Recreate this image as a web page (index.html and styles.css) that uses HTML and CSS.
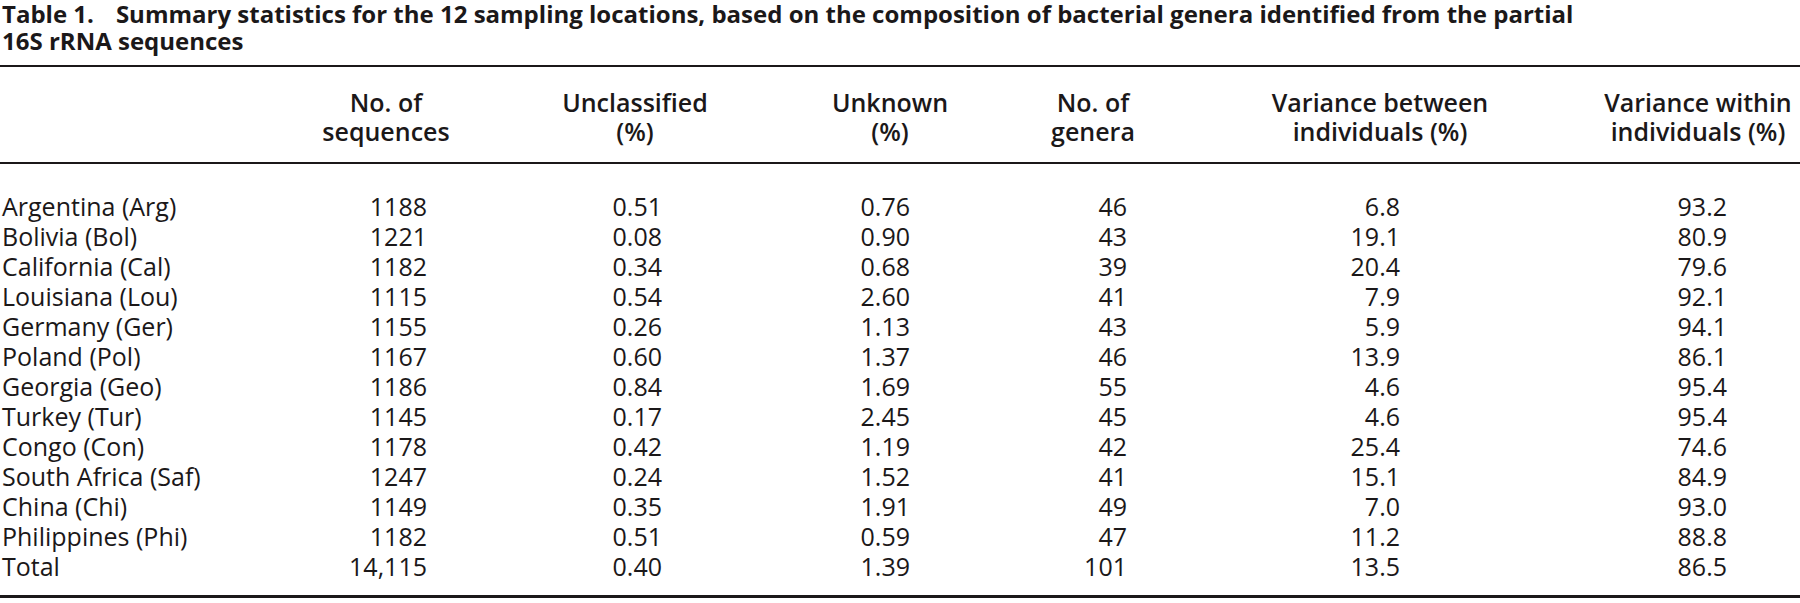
FILE: index.html
```html
<!DOCTYPE html>
<html lang="en">
<head>
<meta charset="utf-8">
<title>Table 1</title>
<link rel="stylesheet" href="styles.css">
</head>
<body>
<div class="page">
  <p class="caption"><span class="label">Table 1.</span><span class="caption-text">Summary statistics for the 12 sampling locations, based on the composition of bacterial genera identified from the partial<br>16S rRNA sequences</span></p>
  <table class="stats">
    <colgroup>
      <col class="c-loc">
      <col class="c-seq">
      <col class="c-uncl">
      <col class="c-unk">
      <col class="c-gen">
      <col class="c-vb">
      <col class="c-vw">
    </colgroup>
    <thead>
      <tr>
        <th class="h-loc"></th>
        <th>No. of<br>sequences</th>
        <th>Unclassified<br>(%)</th>
        <th>Unknown<br>(%)</th>
        <th>No. of<br>genera</th>
        <th>Variance between<br>individuals (%)</th>
        <th>Variance within<br>individuals (%)</th>
      </tr>
    </thead>
    <tbody>
      <tr><td class="loc">Argentina (Arg)</td><td class="seq">1188</td><td class="uncl">0.51</td><td class="unk">0.76</td><td class="gen">46</td><td class="vb">6.8</td><td class="vw">93.2</td></tr>
      <tr><td class="loc">Bolivia (Bol)</td><td class="seq">1221</td><td class="uncl">0.08</td><td class="unk">0.90</td><td class="gen">43</td><td class="vb">19.1</td><td class="vw">80.9</td></tr>
      <tr><td class="loc">California (Cal)</td><td class="seq">1182</td><td class="uncl">0.34</td><td class="unk">0.68</td><td class="gen">39</td><td class="vb">20.4</td><td class="vw">79.6</td></tr>
      <tr><td class="loc">Louisiana (Lou)</td><td class="seq">1115</td><td class="uncl">0.54</td><td class="unk">2.60</td><td class="gen">41</td><td class="vb">7.9</td><td class="vw">92.1</td></tr>
      <tr><td class="loc">Germany (Ger)</td><td class="seq">1155</td><td class="uncl">0.26</td><td class="unk">1.13</td><td class="gen">43</td><td class="vb">5.9</td><td class="vw">94.1</td></tr>
      <tr><td class="loc">Poland (Pol)</td><td class="seq">1167</td><td class="uncl">0.60</td><td class="unk">1.37</td><td class="gen">46</td><td class="vb">13.9</td><td class="vw">86.1</td></tr>
      <tr><td class="loc">Georgia (Geo)</td><td class="seq">1186</td><td class="uncl">0.84</td><td class="unk">1.69</td><td class="gen">55</td><td class="vb">4.6</td><td class="vw">95.4</td></tr>
      <tr><td class="loc">Turkey (Tur)</td><td class="seq">1145</td><td class="uncl">0.17</td><td class="unk">2.45</td><td class="gen">45</td><td class="vb">4.6</td><td class="vw">95.4</td></tr>
      <tr><td class="loc">Congo (Con)</td><td class="seq">1178</td><td class="uncl">0.42</td><td class="unk">1.19</td><td class="gen">42</td><td class="vb">25.4</td><td class="vw">74.6</td></tr>
      <tr><td class="loc">South Africa (Saf)</td><td class="seq">1247</td><td class="uncl">0.24</td><td class="unk">1.52</td><td class="gen">41</td><td class="vb">15.1</td><td class="vw">84.9</td></tr>
      <tr><td class="loc">China (Chi)</td><td class="seq">1149</td><td class="uncl">0.35</td><td class="unk">1.91</td><td class="gen">49</td><td class="vb">7.0</td><td class="vw">93.0</td></tr>
      <tr><td class="loc">Philippines (Phi)</td><td class="seq">1182</td><td class="uncl">0.51</td><td class="unk">0.59</td><td class="gen">47</td><td class="vb">11.2</td><td class="vw">88.8</td></tr>
      <tr class="total"><td class="loc">Total</td><td class="seq">14,115</td><td class="uncl">0.40</td><td class="unk">1.39</td><td class="gen">101</td><td class="vb">13.5</td><td class="vw">86.5</td></tr>
    </tbody>
  </table>
</div>
</body>
</html>
```

FILE: styles.css
```css
html, body {
  margin: 0;
  padding: 0;
  background: #ffffff;
}

body {
  color: #1b1819;
  font-family: "Open Sans", "Noto Sans", "Liberation Sans", sans-serif;
  overflow: hidden;
}

.page {
  width: 1800px;
}

.caption {
  margin: 0;
  padding: 0 0 11px 2px;
  font-size: 24px;
  line-height: 27px;
  font-weight: 700;
  border-bottom: 2px solid #1b1819;
}

.caption .label {
  margin-right: 22px;
}

.stats {
  width: 1800px;
  table-layout: fixed;
  border-collapse: collapse;
  border-bottom: 3px solid #1b1819;
}

.c-loc { width: 260px; }
.c-seq { width: 252px; }
.c-uncl { width: 246px; }
.c-unk { width: 264px; }
.c-gen { width: 142px; }
.c-vb { width: 432px; }
.c-vw { width: 204px; }

.stats thead th {
  font-size: 25px;
  line-height: 29px;
  font-weight: 600;
  text-align: center;
  padding: 21px 0 16px 0;
  border-bottom: 2px solid #1b1819;
  white-space: nowrap;
}

.stats td {
  font-size: 25px;
  line-height: 30px;
  font-weight: 400;
  padding: 0;
  text-align: right;
  white-space: nowrap;
}

.stats tbody tr:first-child td {
  padding-top: 27px;
}

.stats tbody tr.total td {
  padding-bottom: 14px;
}

.stats td.loc {
  text-align: left;
  padding-left: 2px;
}

.stats td.seq { padding-right: 85px; }
.stats td.uncl { padding-right: 96px; }
.stats td.unk { padding-right: 112px; }
.stats td.gen { padding-right: 37px; }
.stats td.vb { padding-right: 196px; }
.stats td.vw { padding-right: 73px; }
```
